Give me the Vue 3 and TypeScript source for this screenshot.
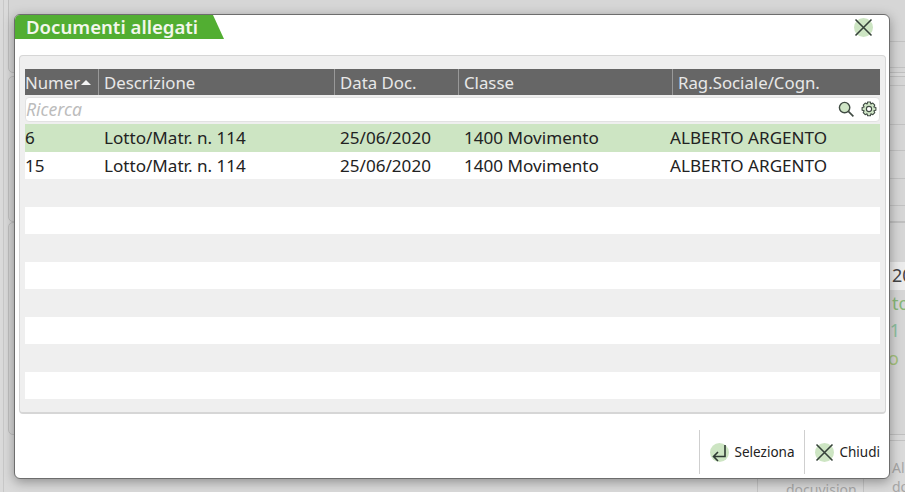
<script setup lang="ts">
interface Col { label: string; width: number }
const cols: Col[] = [
  { label: 'Numer', width: 74 },
  { label: 'Descrizione', width: 236 },
  { label: 'Data Doc.', width: 124 },
  { label: 'Classe', width: 214 },
  { label: 'Rag.Sociale/Cogn.', width: 207 },
]
const rows = [
  ['6', 'Lotto/Matr. n. 114', '25/06/2020', '1400 Movimento', 'ALBERTO ARGENTO'],
  ['15', 'Lotto/Matr. n. 114', '25/06/2020', '1400 Movimento', 'ALBERTO ARGENTO'],
]
const blanks = Array.from({ length: 8 }, (_, i) => i)
const backLines = [41, 67, 85, 124, 150, 178, 205, 262, 440]
</script>

<template>
  <div class="page">
    <div class="bg-card card-a"></div>
    <div class="bg-card card-b"></div>
    <div class="bg-card card-c"></div>
    <div class="bg-edge"></div>
    <div v-for="y in backLines" :key="y" class="bg-line" :style="{ top: y + 'px' }"></div>
    <div class="bg-band"></div>
    <div class="bg-texts">
      <span class="t-dark">20</span>
      <span class="t-green">to</span>
      <span class="t-teal">.1</span>
      <span class="t-olive">o</span>
    </div>
    <div class="bg-foot">
      <span class="foot-a">docuvision</span>
      <span class="foot-b">Al<br />do</span>
      <span class="divider"></span>
    </div>

    <div class="dialog">
      <div class="head">
        <h1 class="title">Documenti allegati</h1>
        <button class="close" aria-label="Chiudi">
          <span class="halo"></span>
          <svg viewBox="0 0 19 19" width="19" height="19"><path d="M1.5 1.5 L17.5 17.5 M17.5 1.5 L1.5 17.5" stroke="#36423a" stroke-width="1.6" fill="none" /></svg>
        </button>
      </div>

      <div class="panel">
        <div class="thead">
          <div v-for="(c, i) in cols" :key="c.label" class="th" :class="{ first: i === 0 }" :style="{ width: c.width + 'px' }">
            {{ c.label }}<span v-if="i === 0" class="caret"></span>
          </div>
        </div>
        <div class="search">
          <span class="placeholder">Ricerca</span>
          <svg class="ic" viewBox="0 0 16 16" width="16" height="16">
            <circle cx="6.6" cy="6.6" r="5.2" fill="#cfe5c6" stroke="#3f4a42" stroke-width="1.4" />
            <path d="M10.4 10.4 L15.4 15.4" stroke="#3f4a42" stroke-width="1.6" />
          </svg>
          <svg class="ic" viewBox="0 0 16 16" width="16" height="16">
            <path d="M6.6 1 h2.8 l.5 2 1.9-.9 2 2 -.9 1.9 2 .5 v2.8 l-2 .5 .9 1.9 -2 2 -1.9-.9 -.5 2 h-2.8 l-.5-2 -1.9 .9 -2-2 .9-1.9 -2-.5 v-2.8 l2-.5 -.9-1.9 2-2 1.9 .9 z" fill="#cfe5c6" stroke="#3f4a42" stroke-width="1.1" stroke-linejoin="round" />
            <circle cx="8" cy="8" r="2.6" fill="#fff" stroke="#3f4a42" stroke-width="1.1" />
          </svg>
        </div>
        <div class="body">
          <div v-for="(r, ri) in rows" :key="ri" class="row" :class="{ sel: ri === 0 }">
            <span class="c0">{{ r[0] }}</span>
            <span class="c1">{{ r[1] }}</span>
            <span class="c2">{{ r[2] }}</span>
            <span class="c3">{{ r[3] }}</span>
            <span class="c4">{{ r[4] }}</span>
          </div>
          <div v-for="b in blanks" :key="b" class="row" :class="{ alt: b % 2 === 0 }"></div>
        </div>
      </div>

      <div class="actions">
        <button class="act">
          <span class="act-icon">
            <span class="halo"></span>
            <svg viewBox="0 0 19 19" width="19" height="19"><path d="M15 2 V13.5 H3.5 M8 9 L3.5 13.5 L8 18" stroke="#2f3a33" stroke-width="1.6" fill="none" /></svg>
          </span>
          <span>Seleziona</span>
        </button>
        <button class="act">
          <span class="act-icon">
            <span class="halo"></span>
            <svg viewBox="0 0 19 19" width="19" height="19"><path d="M1.5 1.5 L17.5 17.5 M17.5 1.5 L1.5 17.5" stroke="#36423a" stroke-width="1.6" fill="none" /></svg>
          </span>
          <span>Chiudi</span>
        </button>
      </div>
    </div>
  </div>
</template>

<style>
html, body { margin: 0; padding: 0; }
</style>

<style scoped>
.page {
  position: relative;
  width: 905px;
  height: 492px;
  overflow: hidden;
  background: #dadada;
  font-family: "Noto Sans", "Open Sans", sans-serif;
  color: #222;
}
.bg-card { position: absolute; left: 8px; width: 920px; border: 1px solid #bfbfbf; border-radius: 5px; background: #d6d6d6; }
.card-a { top: -6px; height: 77px; }
.card-b { top: 76px; height: 144px; }
.card-c { top: 222px; height: 211px; }
.bg-edge { position: absolute; left: 3px; top: 0; width: 1px; height: 492px; background: #c8c8c8; }
.bg-line { position: absolute; left: 886px; right: 0; height: 1px; background: #c2c2c2; }
.bg-band { position: absolute; left: 886px; right: 0; top: 262px; height: 28px; background: #ececec; }
.bg-texts {
  position: absolute;
  left: 892px;
  top: 262px;
  display: flex;
  flex-direction: column;
  font-size: 18px;
  line-height: 27.5px;
  white-space: nowrap;
}
.t-dark { color: #444; }
.t-green { color: #88b878; }
.t-teal { color: #8cc0a0; margin-left: -7px; }
.t-olive { color: #a4c27c; margin-left: -4px; }
.bg-foot { position: absolute; left: 757px; top: 440px; width: 148px; height: 52px; border-left: 1px solid #c4c4c4; font-size: 14px; color: #a6a6a6; }
.foot-a { position: absolute; left: 28px; top: 40px; }
.foot-b { position: absolute; left: 134px; top: 18px; white-space: nowrap; line-height: 19px; }
.divider { position: absolute; left: 105px; top: 0; width: 1px; height: 52px; background: #c4c4c4; }

.dialog {
  position: absolute;
  left: 14px;
  top: 14px;
  width: 876px;
  height: 465px;
  box-sizing: border-box;
  background: #fff;
  border-radius: 6px;
  border: 1px solid #6d6d6d;
  box-shadow: 0 3px 12px rgba(0, 0, 0, .35);
  display: flex;
  flex-direction: column;
}
.head { height: 40px; display: flex; justify-content: space-between; align-items: flex-start; flex: none; }
.title {
  margin: 0;
  width: 209px;
  height: 24px;
  box-sizing: border-box;
  padding-left: 11px;
  background: #52ae32;
  clip-path: polygon(0 0, 198px 0, 100% 100%, 0 100%);
  border-top-left-radius: 5px;
  color: #f3f7ec;
  font-size: 18.6px;
  font-weight: 600;
  line-height: 23px;
  white-space: nowrap;
}
.close {
  position: relative;
  margin: 3px 16px 0 0;
  padding: 0;
  width: 19px;
  height: 19px;
  border: 0;
  background: none;
}
.close svg, .act-icon svg { position: relative; display: block; }
.halo {
  position: absolute;
  left: 0;
  top: 0;
  width: 19px;
  height: 19px;
  border-radius: 50%;
  background: #cde5c3;
}
.panel {
  flex: none;
  box-sizing: border-box;
  margin-left: 4px;
  width: 867px;
  height: 359px;
  padding: 13px 5px 13px 5px;
  background: #efefef;
  border: 1px solid #d6d6d6;
  border-bottom: 2px solid #d6d6d6;
  border-radius: 4px;
}
.thead {
  display: flex;
  height: 26px;
  background: #666;
}
.th {
  box-sizing: border-box;
  border-right: 1px solid #999;
  padding-left: 5px;
  color: #e8e8e8;
  font-size: 16.8px;
  white-space: nowrap;
  display: flex;
  align-items: center;
  overflow: hidden;
}
.th.first { padding-left: 0; }
.th:last-child { border-right: 0; }
.caret {
  margin-left: 1px;
  flex: none;
  width: 0;
  height: 0;
  border-left: 5px solid transparent;
  border-right: 5px solid transparent;
  border-bottom: 5px solid #f4f4f4;
}
.search {
  margin-top: 2px;
  height: 25px;
  box-sizing: border-box;
  background: #fff;
  border: 1px solid #e2e2e2;
  border-radius: 4px;
  display: flex;
  align-items: center;
  gap: 7px;
  padding: 0 2px 2px 0;
}
.placeholder { flex: 1; color: #bcbcbc; font-style: italic; font-size: 17.6px; line-height: 20px; }
.ic { display: block; }
.body { margin-top: 2px; }
.row {
  height: 27.5px;
  background: #fff;
  display: flex;
  align-items: center;
  font-size: 17.1px;
  white-space: nowrap;
}
.row.alt { background: #efefef; }
.row.sel { background: #cde5c3; }
.c0 { width: 79px; }
.c1 { width: 236px; }
.c2 { width: 124px; }
.c3 { width: 206px; }
.actions {
  flex: 1;
  display: flex;
  justify-content: flex-end;
  align-items: center;
  padding: 12px 9px 0 0;
}
.act {
  display: flex;
  align-items: center;
  gap: 6px;
  height: 44px;
  padding: 0 0 0 10px;
  margin-left: 9px;
  border: 0;
  border-left: 1px solid #cfcfcf;
  background: none;
  font-family: inherit;
  font-size: 13.5px;
  color: #222;
}
.act-icon { position: relative; width: 19px; height: 19px; }
</style>
